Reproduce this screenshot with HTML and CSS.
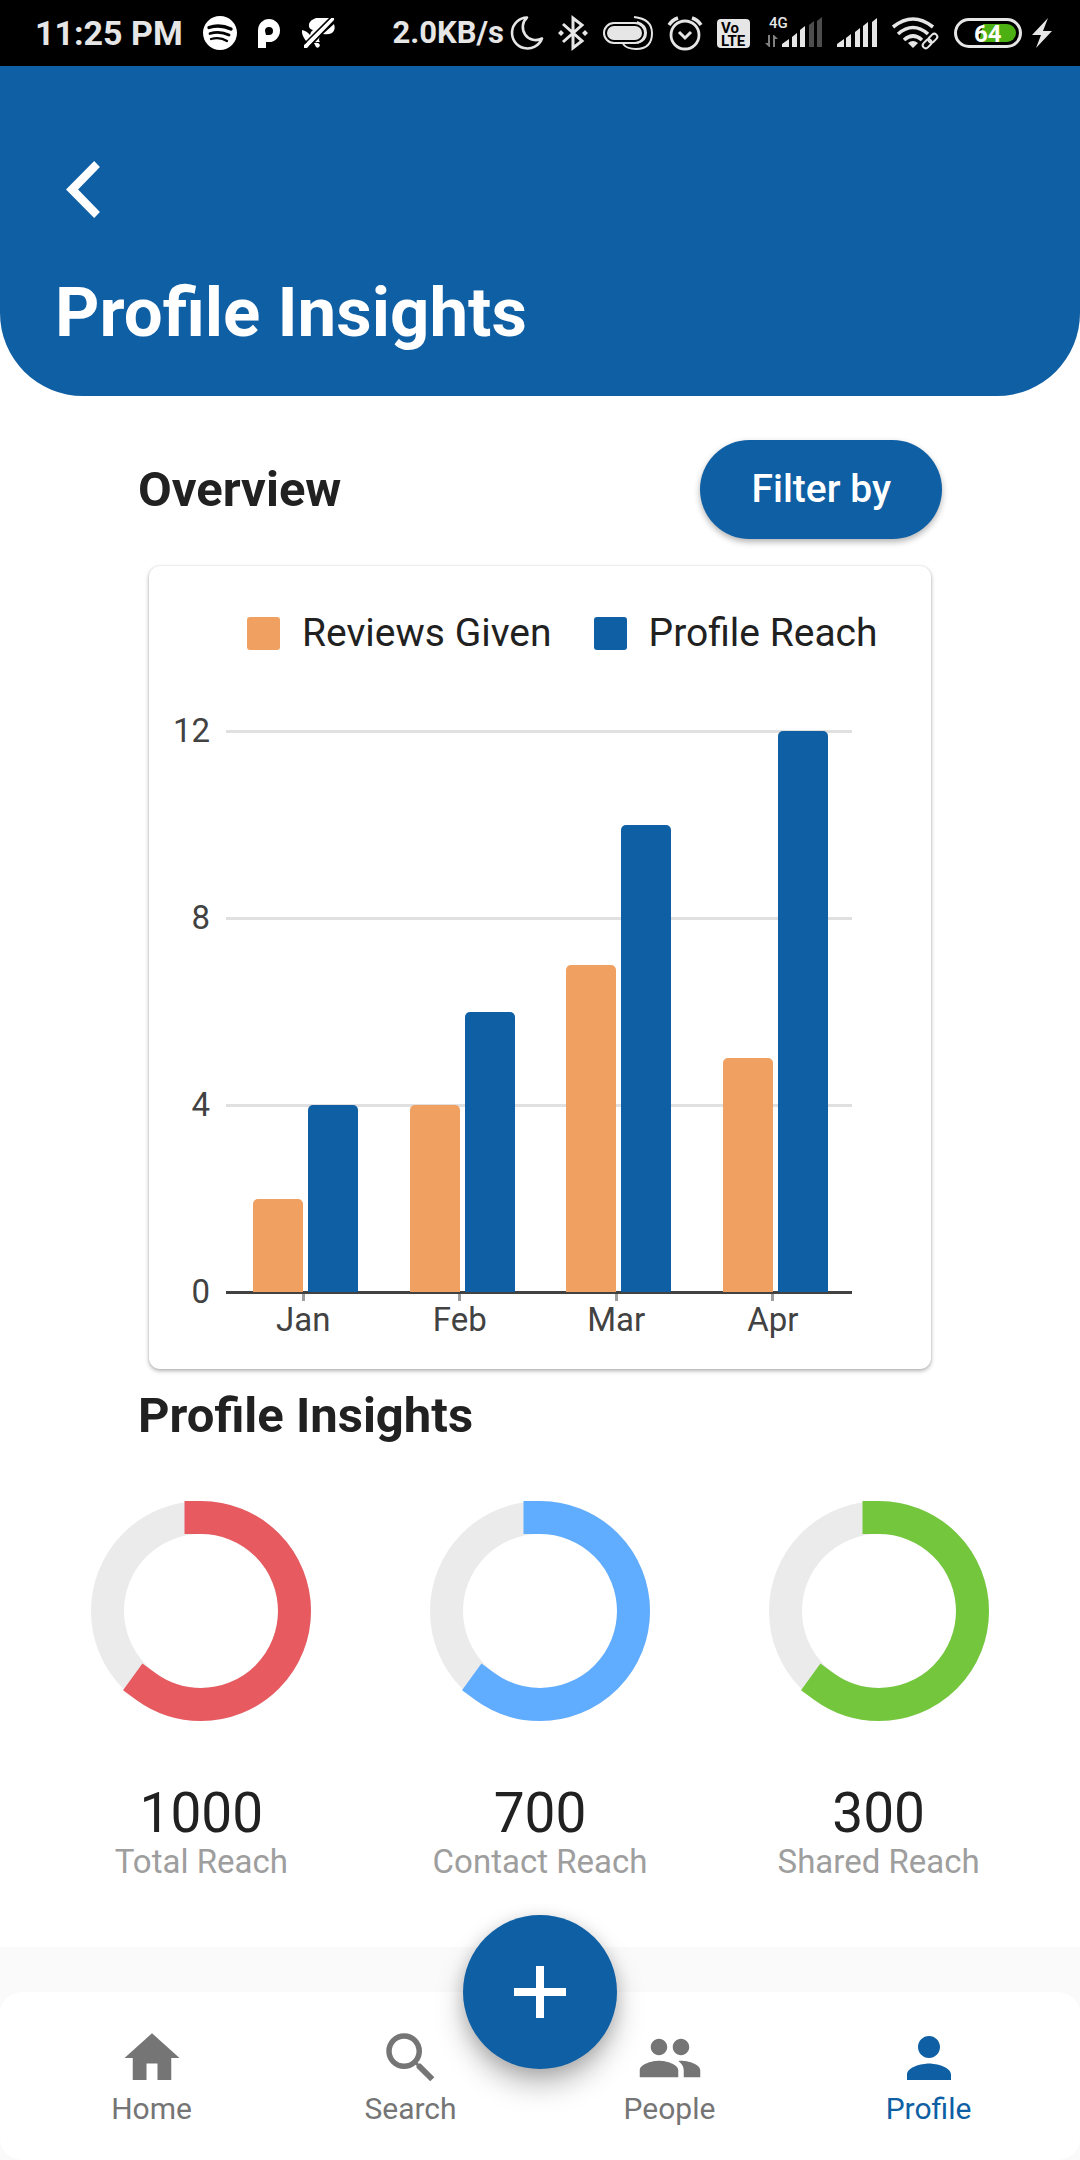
FILE: index.html
```html
<!DOCTYPE html>
<html lang="en">
<head>
<meta charset="utf-8">
<meta name="viewport" content="width=device-width, initial-scale=1">
<title>Profile Insights</title>
<link rel="stylesheet" href="styles.css">
</head>
<body>
<div class="screen">
  <div class="status">
    <div class="status-group status-left">
      <span class="clock">11:25 PM</span>
      <svg width="34" height="34" viewBox="0 0 34 34" aria-hidden="true">
        <circle cx="17" cy="17" r="17" fill="#fff"/>
        <g fill="none" stroke="#000" stroke-linecap="round">
          <path d="M6 11.5Q17 8 28 13" stroke-width="3.4"/>
          <path d="M7 17.500Q17 14.500 26 19" stroke-width="2.800"/>
          <path d="M8 23Q17 20.500 24 25" stroke-width="2.300"/>
        </g>
      </svg>
      <svg width="24" height="34" viewBox="0 0 24 34" aria-hidden="true">
        <path fill="#fff" fill-rule="evenodd" d="M1 32V14.500A11 11.500 0 1 1 12 26H9v6zM9 19h3a4 4 0 1 0-4-4z"/>
      </svg>
      <svg width="34" height="34" viewBox="0 0 34 34" aria-hidden="true">
        <path fill="#fff" d="M15 2h14L10 22 7 27Q0 20 1 14q5 1 8 5 0-3 3-5-5-1-4-6 1-4 7-6zM33 2v3L6 32H3v-3L30 2zM33 8q2 6-2 9-4 2-9 1zM19 21q-2 3 0 5h-5zM13 27q5-1 6 2-1 4-4 2z"/>
        <path d="M30 1 3 28M34 4 8 31" stroke="#000" stroke-width="1.500"/>
      </svg>
    </div>
    <div class="status-group status-right">
      <span class="rate">2.0KB/s</span>
      <svg class="moon" width="32" height="34" viewBox="0 0 32 34" fill="none" stroke="#e6e6e6" stroke-width="2.600" aria-hidden="true">
        <path stroke-linejoin="round" d="M16 1.500A15.500 15.500 0 1 0 31 22.500 13 13 0 0 1 16 1.500z"/>
      </svg>
      <svg width="30" height="34" viewBox="0 0 30 34" fill="none" stroke="#e6e6e6" stroke-width="3" aria-hidden="true">
        <path d="M5 8l19 17-9 7V2l9 7L5 26"/>
        <path fill="#e6e6e6" stroke="none" d="M3 14l3 3-3 3-3-3zM27 14l3 3-3 3-3-3z"/>
      </svg>
      <svg width="50" height="34" viewBox="0 0 50 34" fill="none" stroke="#e6e6e6" stroke-width="2" aria-hidden="true">
        <rect x="1" y="7" width="41" height="20" rx="10"/>
        <rect x="4" y="10" width="35" height="14" rx="7" fill="#e6e6e6" stroke="none"/>
        <path d="M31 1q18 2 18 16 0 16-16 16-9 0-13-5M34 6q9 3 9 11 0 8-9 10"/>
      </svg>
      <svg width="34" height="34" viewBox="0 0 34 34" fill="none" stroke="#e6e6e6" stroke-width="2.800" aria-hidden="true">
        <circle cx="17" cy="19" r="14"/>
        <path d="M11 16l6 6 6-6" stroke-width="3"/>
        <path d="M1 9q3-5 9-7M33 9q-3-5-9-7" stroke-width="3.500"/>
      </svg>
      <svg width="33" height="34" viewBox="0 0 33 34" aria-hidden="true">
        <rect y="3" width="33" height="29" rx="4" fill="#e6e6e6"/>
        <text class="icon-text" x="4" y="17" font-size="15">Vo</text>
        <text class="icon-text" x="4" y="30" font-size="15">LTE</text>
      </svg>
      <svg width="57" height="34" viewBox="0 0 57 34" fill="#e6e6e6" aria-hidden="true">
        <text class="icon-text-light" x="4" y="12" font-size="15">4G</text>
        <path fill="#808080" d="M3 19h2v12H4l-4-4h3zM8 31h2V23h3l-4-4H8z"/>
        <path d="M17 31v-3l7-5v8zM27 21l5-4v14h-5zM35 14l5-4v21h-5z"/>
        <path fill="#4d4d4d" d="M44 9l5-4v26h-5zM52 5l5-4v30h-5z"/>
      </svg>
      <svg width="40" height="34" viewBox="0 0 40 34" fill="#e6e6e6" aria-hidden="true">
        <path d="M0 31v-3l7-5v8zM9 22l5-4v13H9zM18 16l5-4v19h-5zM26 10l5-4v25h-5zM35 6l5-4v29h-5z"/>
      </svg>
      <svg width="47" height="34" viewBox="0 0 47 34" fill="none" stroke="#e6e6e6" stroke-width="3.600" aria-hidden="true">
        <path d="M1 11Q21-5 41 11M6 18q15-13 30 0M12 24q9-8 18 0"/>
        <path fill="#e6e6e6" stroke="none" d="M21 32l-5-5q5-4 10 0z"/>
        <g stroke-width="2" transform="rotate(-45 38 25)"><rect x="29" y="22" width="10" height="6" rx="3"/><rect x="37" y="22" width="10" height="6" rx="3"/></g>
      </svg>
      <svg width="68" height="34" viewBox="0 0 68 34" aria-hidden="true">
        <rect x="1.500" y="3.500" width="65" height="27" rx="13.500" fill="none" stroke="#e6e6e6" stroke-width="3"/>
        <path fill="#4caf12" d="M29 8h24a9 9 0 0 1 0 18H25z"/>
        <text class="battery-text" x="20" y="26" font-size="24">64</text>
      </svg>
      <svg class="bolt" width="20" height="34" viewBox="0 0 20 34" fill="#e6e6e6" aria-hidden="true">
        <path d="M16 2 0 19h9L4 32 20 15h-9z"/>
      </svg>
    </div>
  </div>

  <header class="header">
    <button class="back" type="button" aria-label="Back">
      <svg width="69" height="69" viewBox="0 0 24 24" fill="#fff" aria-hidden="true"><path d="M11.800 4.200 9.800 2.100 0 12l9.800 9.900 2-2.100L4.200 12z"/></svg>
    </button>
    <h1 class="title">Profile Insights</h1>
  </header>

  <main class="main">
    <section class="overview">
      <div class="overview-head">
        <h2 class="heading">Overview</h2>
        <button class="filter" type="button">Filter by</button>
      </div>
      <div class="card">
        <ul class="legend">
          <li class="legend-item"><span class="swatch reviews"></span>Reviews Given</li>
          <li class="legend-item"><span class="swatch reach"></span>Profile Reach</li>
        </ul>
        <div class="chart">
          <div class="y-axis"><span>12</span><span>8</span><span>4</span><span>0</span></div>
          <div class="plot-column">
            <div class="plot">
              <div class="grid-lines"><i></i><i></i><i></i><i class="axis-line"></i></div>
              <div class="bars">
                <div class="pair"><span class="bar reviews" style="height:16.667%"></span><span class="bar reach" style="height:33.333%"></span></div>
                <div class="pair"><span class="bar reviews" style="height:33.333%"></span><span class="bar reach" style="height:50%"></span></div>
                <div class="pair"><span class="bar reviews" style="height:58.333%"></span><span class="bar reach" style="height:83.333%"></span></div>
                <div class="pair"><span class="bar reviews" style="height:41.667%"></span><span class="bar reach" style="height:100%"></span></div>
              </div>
            </div>
            <div class="x-axis"><span>Jan</span><span>Feb</span><span>Mar</span><span>Apr</span></div>
          </div>
        </div>
      </div>
      <h2 class="heading">Profile Insights</h2>
    </section>

    <section class="stats">
      <div class="stat">
        <svg class="ring" viewBox="0 0 220 220" aria-hidden="true"><circle class="ring-track" cx="110" cy="110" r="93.500"/><circle class="ring-value red" cx="110" cy="110" r="93.500" pathLength="100" transform="rotate(-90 110 110)"/></svg>
        <span class="number">1000</span><span class="caption">Total Reach</span>
      </div>
      <div class="stat">
        <svg class="ring" viewBox="0 0 220 220" aria-hidden="true"><circle class="ring-track" cx="110" cy="110" r="93.500"/><circle class="ring-value sky" cx="110" cy="110" r="93.500" pathLength="100" transform="rotate(-90 110 110)"/></svg>
        <span class="number">700</span><span class="caption">Contact Reach</span>
      </div>
      <div class="stat">
        <svg class="ring" viewBox="0 0 220 220" aria-hidden="true"><circle class="ring-track" cx="110" cy="110" r="93.500"/><circle class="ring-value green" cx="110" cy="110" r="93.500" pathLength="100" transform="rotate(-90 110 110)"/></svg>
        <span class="number">300</span><span class="caption">Shared Reach</span>
      </div>
    </section>
  </main>

  <nav class="nav">
    <a class="nav-item" href="#home"><svg class="nav-icon" viewBox="0 0 24 24" aria-hidden="true"><path d="M10 20v-6h4v6h5v-8h3L12 3 2 12h3v8z"/></svg>Home</a>
    <a class="nav-item" href="#search"><svg class="nav-icon" viewBox="0 0 24 24" aria-hidden="true"><path d="M15.500 14h-.79l-.28-.27A6.471 6.471 0 0 0 16 9.500 6.500 6.500 0 1 0 9.500 16c1.610 0 3.090-.59 4.230-1.570l.27.28v.79l5 4.990L20.490 19l-4.990-5zm-6 0C7.010 14 5 11.990 5 9.500S7.010 5 9.500 5 14 7.010 14 9.500 11.990 14 9.500 14z"/></svg>Search</a>
    <a class="nav-item" href="#people"><svg class="nav-icon" viewBox="0 0 24 24" aria-hidden="true"><path d="M16 11c1.660 0 2.990-1.340 2.990-3S17.660 5 16 5s-3 1.340-3 3 1.340 3 3 3zm-8 0c1.660 0 2.990-1.340 2.990-3S9.660 5 8 5 5 6.340 5 8s1.340 3 3 3zm0 2c-2.330 0-7 1.170-7 3.500V19h14v-2.500c0-2.330-4.670-3.500-7-3.500zm8 0c-.29 0-.62.020-.97.050 1.160.84 1.970 1.970 1.970 3.450V19h6v-2.500c0-2.330-4.670-3.500-7-3.500z"/></svg>People</a>
    <a class="nav-item active" href="#profile" aria-current="page"><svg class="nav-icon" viewBox="0 0 24 24" aria-hidden="true"><path d="M12 12c2.210 0 4-1.790 4-4s-1.790-4-4-4-4 1.790-4 4 1.790 4 4 4zm0 2c-2.670 0-8 1.340-8 4v2h16v-2c0-2.660-5.330-4-8-4z"/></svg>Profile</a>
    <button class="fab" type="button" aria-label="Add">
      <svg width="52" height="52" viewBox="0 0 52 52" fill="#fff" aria-hidden="true"><path d="M22 0h8v22h22v8H30v22h-8V30H0v-8h22z"/></svg>
    </button>
  </nav>
</div>
</body>
</html>
```
FILE: styles.css
```css
:root {
  --blue: #0e5fa4;
  --orange: #f0a060;
  --ink: #212121;
}

* { box-sizing: border-box; }

body {
  margin: 0;
  background: #fafafa;
  color: var(--ink);
  font-family: Roboto, "Liberation Sans", sans-serif;
}

svg { display: block; flex: none; overflow: visible; }

button {
  border: 0;
  padding: 0;
  font: inherit;
  cursor: pointer;
}

/* The upper half is white so that it shows behind the header's round corners */
.screen {
  display: flex;
  flex-direction: column;
  min-height: 100vh;
  background: linear-gradient(#fff 50%, #fafafa 50%);
}

/* Status bar */
.status {
  display: flex;
  justify-content: space-between;
  align-items: center;
  height: 66px;
  padding: 0 28px 0 35px;
  background: #000;
  color: #e6e6e6;
  font-weight: 700;
  white-space: nowrap;
}

.status-group { display: flex; align-items: center; }
.status-left { gap: 20px; }
.status-right { gap: 15px; }
.clock { font-size: 34px; line-height: 40px; }
.rate { font-size: 31px; line-height: 40px; }
.status-right .moon { margin-left: -8px; }
.status-right .bolt { margin-left: -5px; }
.icon-text { fill: #000; font-weight: 700; }
.icon-text-light { fill: #e6e6e6; font-weight: 500; }
.battery-text { fill: #fff; font-weight: 700; }

/* Header */
.header {
  padding: 89px 55px 43px;
  border-radius: 0 0 83px 83px;
  background: var(--blue);
  color: #fff;
}

.back {
  display: block;
  margin: 0 11px 49px;
  background: none;
}

.title {
  margin: 0;
  font-size: 69px;
  font-weight: 700;
  line-height: 80px;
}

/* Overview */
.main {
  flex: 1;
  padding: 44px 0 66px;
  background: #fff;
}

.overview { padding: 0 138px; }

.overview-head {
  display: flex;
  justify-content: space-between;
  align-items: center;
}

.heading {
  margin: 0;
  font-size: 49px;
  font-weight: 700;
  line-height: 58px;
}

.filter {
  padding: 0 51px;
  border-radius: 50px;
  background: var(--blue);
  box-shadow: 0 3px 6px rgba(0, 0, 0, .3);
  color: #fff;
  font-size: 39px;
  font-weight: 500;
  line-height: 99px;
}

.card {
  margin: 27px 11px 18px;
  padding: 44px 0 30px;
  border-radius: 11px;
  background: #fff;
  box-shadow: 0 2px 4px rgba(0, 0, 0, .3), 0 0 2px rgba(0, 0, 0, .12);
}

.legend {
  display: flex;
  gap: 42px;
  margin: 0 0 55px;
  padding: 0 0 0 98px;
  list-style: none;
  font-size: 39px;
  line-height: 46px;
  white-space: nowrap;
}

.legend-item { display: flex; align-items: center; gap: 22px; }
.swatch { width: 33px; height: 33px; border-radius: 3px; }
.reviews { background: var(--orange); }
.reach { background: var(--blue); }

.chart {
  display: grid;
  grid-template-columns: 61px 1fr;
  column-gap: 16px;
  align-items: start;
  padding-right: 79px;
  color: #424242;
  font-size: 33px;
}

.y-axis {
  display: flex;
  flex-direction: column;
  justify-content: space-between;
  height: 601px;
  line-height: 40px;
  text-align: right;
}

.plot-column { padding-top: 19px; }
.plot { display: grid; }
.grid-lines, .bars { grid-area: 1 / 1; }
.grid-lines i { display: block; height: 187px; border-top: 3px solid #e0e0e0; }
.grid-lines .axis-line { height: 3px; border-color: #424242; }

.bars {
  display: grid;
  grid-template-columns: repeat(4, 1fr);
  padding: 1px 0 2px;
}

.pair {
  display: flex;
  justify-content: center;
  align-items: flex-end;
  gap: 5px;
  padding-left: 3px;
}

.bar { width: 50px; border-radius: 5px 5px 0 0; }

.x-axis {
  display: grid;
  grid-template-columns: repeat(4, 1fr);
  line-height: 38px;
  text-align: center;
}

.x-axis span { padding-right: 2px; }

.x-axis span::before {
  content: "";
  display: block;
  width: 3px;
  height: 7px;
  margin: 0 auto;
  background: #9e9e9e;
}

/* Ring stats */
.stats {
  display: grid;
  grid-template-columns: repeat(3, 1fr);
  margin-top: 56px;
  padding: 0 32px;
}

.stat { display: flex; flex-direction: column; align-items: center; }
.ring { width: 220px; height: 220px; margin-bottom: 61px; }
.ring circle { fill: none; stroke-width: 33px; }
.ring-track { stroke: #ebebeb; }
.ring-value { stroke-dasharray: 60 100; stroke-linecap: square; }
.ring .red { stroke: #e65a60; }
.ring .sky { stroke: #60adff; }
.ring .green { stroke: #74c73d; }
.number { font-size: 55px; line-height: 62px; }
.caption { color: #9e9e9e; font-size: 33px; line-height: 36px; }

/* Bottom navigation */
.nav {
  position: relative;
  display: grid;
  grid-template-columns: repeat(4, 1fr);
  height: 168px;
  margin-top: 45px;
  padding: 33px 22px 0;
  border-radius: 22px;
  background: #fff;
}

.nav-item {
  display: flex;
  flex-direction: column;
  align-items: center;
  color: #757575;
  font-size: 30px;
  line-height: 36px;
  text-decoration: none;
}

.nav-item.active { color: var(--blue); }
.nav-icon { width: 66px; height: 66px; fill: currentColor; }

.fab {
  position: absolute;
  top: -77px;
  left: calc(50% - 77px);
  display: grid;
  place-items: center;
  width: 154px;
  height: 154px;
  border-radius: 50%;
  background: var(--blue);
  box-shadow: 0 16px 28px rgba(0, 0, 0, .26), 0 3px 16px rgba(0, 0, 0, .14);
}
```
